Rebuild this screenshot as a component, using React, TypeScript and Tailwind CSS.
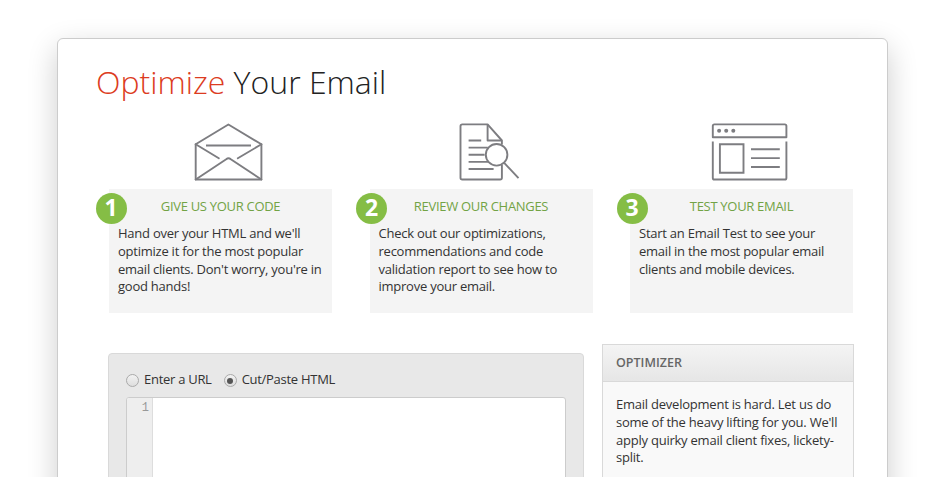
import type { ReactNode } from "react";

function EnvelopeIcon() {
  return (
    <svg width="70" height="58" viewBox="0 0 70 58" fill="none" stroke="#7d7d81" strokeWidth="1.9" strokeLinejoin="round" strokeLinecap="round">
      <path d="M1.7 21.3 34.4 1.5 67.4 21.3V56.5H1.7Z" />
      <path d="M12 22.5h45" strokeLinecap="butt" />
      <path d="M1.7 21.3 24.8 35.2M67.4 21.3 43.8 35.2" />
      <path d="M1.7 56.5 32.2 36.2Q34.5 34.2 36.8 36.2L67.4 56.5" />
    </svg>
  );
}

function ReviewIcon() {
  return (
    <svg width="62" height="58" viewBox="0 0 62 58" fill="none" stroke="#7d7d81" strokeWidth="1.9" strokeLinejoin="round">
      <path d="M43.9 42v12.7q0 1.8-1.8 1.8H4.3q-1.8 0-1.8-1.8V3.2q0-1.8 1.8-1.8H29.6L43.9 17.5v4" />
      <path d="M29.6 1.4v16.1h14.3" />
      <path d="M10.6 17.5h12.6M10.6 24.6h19.2M10.6 31.8h16M10.6 38.9h20.5M10.6 46h25" />
      <circle cx="38.6" cy="31.8" r="10.8" fill="white" />
      <path d="M46.2 39.8 60.5 55.2" />
    </svg>
  );
}

function PageIcon() {
  return (
    <svg width="78" height="58" viewBox="0 0 78 58" fill="none" stroke="#7d7d81" strokeWidth="1.9" strokeLinejoin="round">
      <path d="M1.8 14.2V3q0-1.6 1.6-1.6h70.4q1.6 0 1.6 1.6v11.2Z" />
      <path d="M1.8 18.5v36.4q0 1.6 1.6 1.6h70.4q1.6 0 1.6-1.6V18.5" />
      <path d="M8.9 21.2h23.6v28.6H8.9Z" strokeLinejoin="miter" />
      <path d="M40 26.3H68.8M40 35.1H68.8M40 44H68.8" />
      <g fill="#7d7d81" stroke="none">
        <circle cx="8.1" cy="7.8" r="2" />
        <circle cx="15.2" cy="7.8" r="2" />
        <circle cx="22.3" cy="7.8" r="2" />
      </g>
    </svg>
  );
}

function Step({ number, title, icon, children }: { number: number; title: string; icon: ReactNode; children: ReactNode }) {
  return (
    <section className="w-[223px]">
      <div className="flex h-[66px] items-start justify-center pl-[16px]">{icon}</div>
      <div className="relative h-[124px] bg-[#f4f4f4] pl-[9px] pt-[8px]">
        <span className="absolute -left-[13.5px] top-[4px] flex size-[31px] items-center justify-center rounded-full bg-[#85bd45] pb-[2px] text-[23px] font-bold leading-none text-white">
          {number}
        </span>
        <h2 className="-ml-[9px] text-center text-[13px] leading-[18px] tracking-[-0.3px] text-[#72a345]">{title}</h2>
        <p className="mt-[10px] whitespace-nowrap text-[13px] leading-[17.75px] tracking-[-0.24px]">{children}</p>
      </div>
    </section>
  );
}

function Radio({ checked, label }: { checked?: boolean; label: string }) {
  return (
    <label className="flex items-start gap-[5px]">
      <span className="mt-[3px] flex size-[13px] items-center justify-center rounded-full border border-[#aaa] bg-linear-to-b from-[#f2f2f2] to-[#dedede]">
        {checked && <span className="size-[6px] rounded-full bg-[#555]" />}
      </span>
      <span className="-mt-px">{label}</span>
    </label>
  );
}

export default function App() {
  return (
    <main className="h-[477px] overflow-hidden bg-white pl-[57px] pt-[38px] font-['Open_Sans',sans-serif] text-[13px] text-[#333]">
      <div className="h-[600px] w-[831px] rounded-[6px] border border-[#ccc] bg-white shadow-[0_10px_30px_rgba(0,0,0,0.2)]">
        <h1 className="ml-[38px] mt-[21px] h-[63px] whitespace-nowrap text-[32px] font-light leading-[44px] text-[#222]">
          <span className="text-[#dc3b21]">Optimize</span> Your Email
        </h1>
        <div className="ml-[51px] flex w-[744px] justify-between">
          <Step number={1} title="GIVE US YOUR CODE" icon={<EnvelopeIcon />}>
            Hand over your HTML and we'll<br />optimize it for the most popular<br />email clients. Don't worry, you're in<br />good hands!
          </Step>
          <Step number={2} title="REVIEW OUR CHANGES" icon={<ReviewIcon />}>
            Check out our optimizations,<br />recommendations and code<br />validation report to see how to<br />improve your email.
          </Step>
          <Step number={3} title="TEST YOUR EMAIL" icon={<PageIcon />}>
            Start an Email Test to see your<br />email in the most popular email<br />clients and mobile devices.
          </Step>
        </div>
        <div className="ml-[50px] mt-[31px] flex gap-[18px]">
          <form className="mt-[9px] h-[220px] w-[476px] rounded-[4px] border border-[#d9d9d9] bg-[#e8e8e8] px-[17px]">
            <div className="flex h-[43px] gap-[12px] pt-[17px] leading-[18px] tracking-[-0.28px]">
              <Radio label="Enter a URL" />
              <Radio label="Cut/Paste HTML" checked />
            </div>
            <div className="flex h-[170px] overflow-hidden rounded-[3px] border border-[#ccc] bg-white">
              <div className="w-[26px] border-r border-[#ddd] bg-[#eee] pr-[3px] pt-[3px] text-right font-['Liberation_Mono',monospace] text-[12px] leading-[14px] text-[#999]">1</div>
            </div>
          </form>
          <aside className="h-[240px] w-[252px] border border-[#d9d9d9] bg-[#f9f9f9]">
            <h2 className="flex h-[37px] items-center border-b border-[#d9d9d9] bg-linear-to-b from-[#f4f4f4] to-[#e6e6e6] pl-[13px] pt-px text-[12.5px] font-semibold text-[#666]">OPTIMIZER</h2>
            <p className="whitespace-nowrap pl-[13px] pt-[14px] leading-[17.8px] tracking-[-0.23px]">
              Email development is hard. Let us do<br />some of the heavy lifting for you. We'll<br />apply quirky email client fixes, lickety-<br />split.
            </p>
          </aside>
        </div>
      </div>
    </main>
  );
}
